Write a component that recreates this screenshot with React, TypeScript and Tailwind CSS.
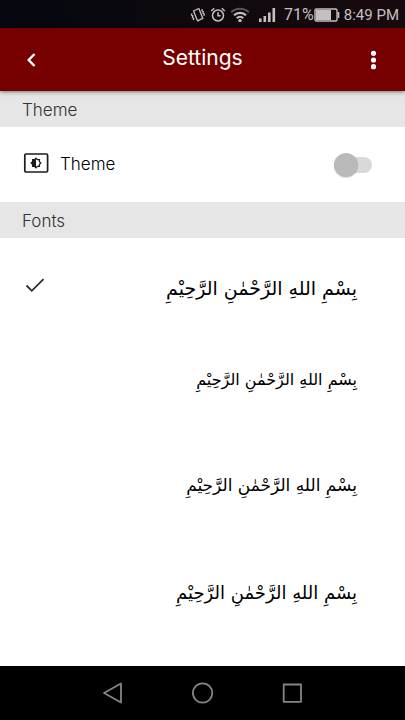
import { useState } from "react";

const BISMILLAH = "بِسْمِ اللهِ الرَّحْمٰنِ الرَّحِيْمِ";

const FONTS = [
  { id: "muhammadi", text: BISMILLAH, row: "h-[100px]", sample: "text-[19px]" },
  { id: "saleem", text: BISMILLAH, row: "h-[84px]", sample: "text-[16px]" },
  { id: "noorehira", text: BISMILLAH, row: "h-[128px]", sample: "text-[17px]" },
  { id: "indopak", text: BISMILLAH, row: "h-[84px]", sample: "text-[18px]" },
];

function StatusBar() {
  return (
    <div className="flex h-7 items-center justify-end bg-linear-to-r from-[#05080f] to-[#180a0e] pt-0.5 pr-1.5 text-[#c4c0c2]">
      <svg className="size-4" viewBox="0 0 16 16" fill="none" stroke="currentColor" strokeWidth="1.3" strokeLinejoin="round">
        <path d="M3.5 4 8.800 1.500l4 9.800L7.500 13.800z" />
        <path d="m2 6.500-.6 1.500 1.500 1-.6 1.500 1.500 1-.5 1.500M12.300 2.200l-.4 1.500 1.500 1-.5 1.500 1.500 1-.6 1.500" />
      </svg>
      <svg className="ml-1 size-4" viewBox="0 0 16 16" fill="none" stroke="currentColor" strokeWidth="1.5">
        <circle cx="8" cy="8.5" r="5.5" />
        <path d="M8 5.3v3.5h2.6M1.2 4l3-2.7M14.8 4l-3-2.7" />
      </svg>
      <svg className="ml-1 h-4 w-5" viewBox="0 0 20 16" fill="none" stroke="currentColor" strokeWidth="2.2">
        <path d="M1.2 5.2c5-4.6 12.6-4.6 17.6 0" stroke="#55565a" />
        <path d="M4 8.3c3.4-3.2 8.6-3.2 12 0M6.8 11.2c1.8-1.7 4.6-1.7 6.4 0" />
        <circle cx="10" cy="13.6" r="1.7" fill="currentColor" stroke="none" />
      </svg>
      <svg className="ml-2 h-4 w-[18px]" viewBox="0 0 18 16" fill="currentColor">
        <path d="M1 11.5h2.6V15H1zM5.5 9h2.6v6H5.5zM10 5.5h2.6V15H10zM14.5 1h2.6v14h-2.6z" />
      </svg>
      <span className="ml-2 text-base leading-5">71%</span>
      <svg className="h-4 w-[26px]" viewBox="0 0 26 16">
        <rect x="1" y="2" width="22" height="12" rx="1.5" fill="none" stroke="currentColor" strokeWidth="1.4" />
        <rect x="2" y="3" width="15" height="10" fill="currentColor" />
        <path d="M24.5 5v6" stroke="currentColor" strokeWidth="1.6" />
      </svg>
      <span className="ml-1 text-[15px] leading-5">8:49 PM</span>
    </div>
  );
}

function BrightnessIcon() {
  return (
    <svg className="mb-1 h-6 w-7" viewBox="0 0 28 24" fill="none" stroke="#1c1c1c" strokeWidth="1.7">
      <rect x="2.8" y="3" width="22.8" height="18" rx="1.2" />
      <path
        d="M14 7.200l1.400 1.400h2v2L18.800 12l-1.400 1.400v2h-2L14 16.800l-1.400-1.400h-2v-2L9.200 12l1.400-1.400v-2h2z"
        strokeWidth="1.3"
      />
      <path d="M14 7.200v9.600l-1.400-1.400h-2v-2L9.200 12l1.400-1.400v-2h2z" fill="#1c1c1c" stroke="none" />
    </svg>
  );
}

function SectionTitle({ children }: { children: string }) {
  return (
    <h2 className="h-9 bg-[#e6e6e6] pt-px pl-[22px] font-['Inter'] text-[17px] leading-9 font-light text-[#333]">
      {children}
    </h2>
  );
}

function NavBar() {
  return (
    <nav className="flex h-[54px] items-center justify-center gap-[66px] bg-black text-[#858585]">
      <button aria-label="Back">
        <svg className="size-6" viewBox="0 0 24 24" fill="none" stroke="currentColor" strokeWidth="1.8" strokeLinejoin="round">
          <path d="M20 2.5v19L3 12z" />
        </svg>
      </button>
      <button aria-label="Home">
        <svg className="size-6" viewBox="0 0 24 24" fill="none" stroke="currentColor" strokeWidth="1.8">
          <circle cx="11.6" cy="12" r="9.7" />
        </svg>
      </button>
      <button aria-label="Recent apps">
        <svg className="size-6" viewBox="0 0 24 24" fill="none" stroke="currentColor" strokeWidth="1.8" strokeLinejoin="round">
          <rect x="2.7" y="3.5" width="17.3" height="17.3" />
        </svg>
      </button>
    </nav>
  );
}

export default function App() {
  const [dark, setDark] = useState(false);
  const [font, setFont] = useState("muhammadi");

  return (
    <div className="flex min-h-screen flex-col bg-white font-['Roboto',sans-serif]">
      <StatusBar />
      <header className="z-10 flex h-[63px] items-center justify-between bg-[#760000] px-5 text-white shadow-[0_1px_4px_rgba(0,0,0,0.5)]">
        <button aria-label="Back">
          <svg className="size-6" viewBox="0 0 24 24" fill="none" stroke="currentColor" strokeWidth="2.4">
            <path d="M14.5 6 8.7 12l5.8 6" />
          </svg>
        </button>
        <h1 className="pb-1 font-['Inter'] text-[21px]">Settings</h1>
        <button aria-label="More">
          <svg className="size-6" viewBox="0 0 24 24" fill="currentColor">
            <circle cx="12.5" cy="5.3" r="2.6" />
            <circle cx="12.5" cy="12" r="2.6" />
            <circle cx="12.5" cy="18.7" r="2.6" />
          </svg>
        </button>
      </header>

      <main className="flex-1">
        <SectionTitle>Theme</SectionTitle>
        <label className="flex h-[75px] items-center pt-px pr-[33px] pl-[22px]">
          <BrightnessIcon />
          <span className="ml-2.5 flex-1 font-['Inter'] text-[17px] font-light text-black">Theme</span>
          <input
            type="checkbox"
            role="switch"
            checked={dark}
            onChange={(e) => setDark(e.target.checked)}
            className="peer sr-only"
          />
          <span className="flex h-4 w-[38px] items-center rounded-full bg-[#d9d9d9] peer-checked:justify-end">
            <span className="size-6 shrink-0 rounded-full bg-[#b9b9b9] shadow-[0_1px_1px_rgba(0,0,0,0.15)]" />
          </span>
        </label>

        <SectionTitle>Fonts</SectionTitle>
        <div role="radiogroup" aria-label="Fonts">
          {FONTS.map((f) => (
            <label key={f.id} className={`flex items-center justify-between pr-12 pl-[23px] ${f.row}`}>
              <input
                type="radio"
                name="font"
                value={f.id}
                checked={font === f.id}
                onChange={() => setFont(f.id)}
                className="peer sr-only"
              />
              <svg
                className="invisible mb-1.5 size-6 peer-checked:visible"
                viewBox="0 0 24 24"
                fill="none"
                stroke="#2b2b2b"
                strokeWidth="1.8"
              >
                <path d="M3.5 12.5 8.800 17.800 20.500 6.200" />
              </svg>
              <span dir="rtl" lang="ar" className={`font-['DejaVu_Sans',sans-serif] whitespace-nowrap text-black ${f.sample}`}>
                {f.text}
              </span>
            </label>
          ))}
        </div>
      </main>

      <NavBar />
    </div>
  );
}
